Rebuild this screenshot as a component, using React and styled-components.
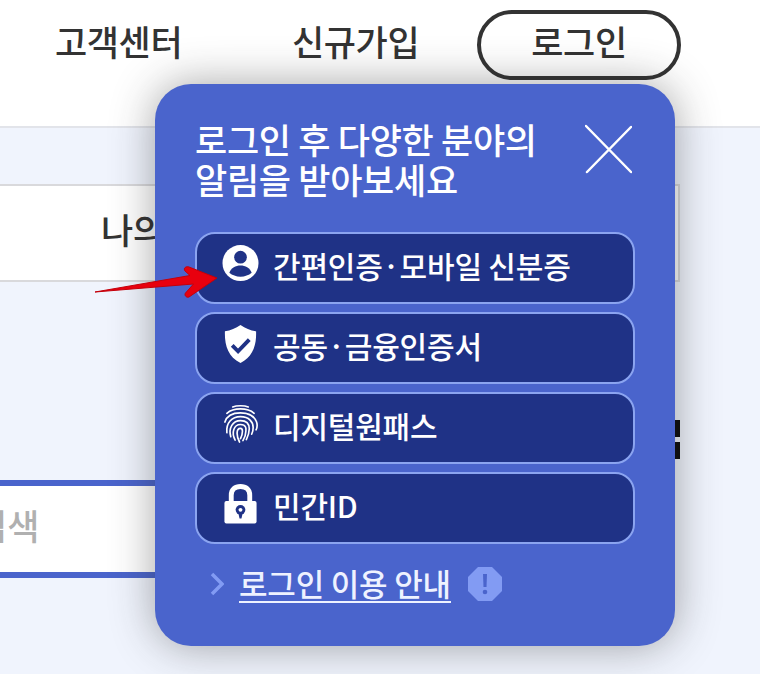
import React from 'react'
import styled, {createGlobalStyle} from 'styled-components'

const colors = {
	panel: '#4a64cc',
	navy: '#1f3286',
	line: '#8ba4f0',
	accent: '#829bf3',
	page: '#f0f4fd',
	ink: '#333333',
}

const GlobalStyle = createGlobalStyle`
	html, body {
		margin: 0;
		padding: 0;
	}
	body {
		width: 760px;
		height: 674px;
		overflow: hidden;
		background: ${colors.page};
		font-family: 'Noto Sans CJK KR', 'Noto Sans', sans-serif;
	}
`

const Page = styled.div`
	position: relative;
	width: 760px;
	height: 674px;
	overflow: hidden;
`

const Header = styled.header`
	display: flex;
	align-items: flex-start;
	height: 128px;
	padding: 10px 0 0 55px;
	box-sizing: border-box;
	background: #fff;
	border-bottom: 2px solid #e2e4ea;
`

const NavLink = styled.a`
	width: 237px;
	height: 70px;
	line-height: 62px;
	font-size: 35px;
	font-weight: 500;
	letter-spacing: -0.4px;
	color: ${colors.ink};
`

const LoginButton = styled.a`
	width: 204px;
	height: 70px;
	margin-left: -52px;
	box-sizing: border-box;
	border: 4px solid ${colors.ink};
	border-radius: 35px;
	line-height: 54px;
	text-align: center;
	font-size: 35px;
	font-weight: 500;
	letter-spacing: -0.4px;
	color: ${colors.ink};
`

const Content = styled.main`
	display: flex;
	flex-direction: column;
	padding-top: 56px;
`

const MenuRow = styled.div`
	height: 98px;
	width: 682px;
	margin-left: -2px;
	padding-left: 101px;
	box-sizing: border-box;
	background: #fff;
	border: 2px solid #d9d9dc;
	line-height: 86px;
	font-size: 35px;
	font-weight: 500;
	letter-spacing: -0.5px;
	color: ${colors.ink};
`

const Marks = styled.div`
	display: flex;
	flex-direction: column;
	gap: 5px;
	align-self: flex-end;
	width: 25px;
	margin: 138px 80px 0 0;
`

const Mark = styled.span`
	height: 17px;
	background: #0a0a0c;
`

const SearchBox = styled.div`
	width: 300px;
	height: 98px;
	margin-top: 21px;
	box-sizing: border-box;
	background: #fff;
	border-top: 6px solid ${colors.panel};
	border-bottom: 6px solid ${colors.panel};
	overflow: hidden;
`

const SearchHint = styled.span`
	display: block;
	margin-left: -25px;
	line-height: 78px;
	font-size: 35px;
	font-weight: 500;
	color: #b0b0b0;
`

const Popup = styled.section`
	position: absolute;
	left: 155px;
	top: 84px;
	display: flex;
	flex-direction: column;
	width: 520px;
	height: 562px;
	padding: 35px 40px 0;
	box-sizing: border-box;
	background: ${colors.panel};
	border-radius: 36px;
	box-shadow: 0 0 44px rgba(40, 40, 40, 0.42);
`

const PopupTop = styled.div`
	display: flex;
	justify-content: space-between;
	align-items: flex-start;
	height: 113px;
`

const Title = styled.h2`
	margin: 0;
	font-size: 35px;
	line-height: 40px;
	font-weight: 500;
	letter-spacing: -0.3px;
	white-space: nowrap;
	color: #fff;
`

const CloseIcon = styled.svg`
	display: block;
	width: 47px;
	height: 50px;
	margin: 5px 3px 0 0;
`

const Options = styled.div`
	display: flex;
	flex-direction: column;
	gap: 8px;
`

const Option = styled.a`
	display: flex;
	align-items: center;
	gap: 14px;
	height: 72px;
	padding: 0 0 6px 25px;
	box-sizing: border-box;
	background: ${colors.navy};
	border: 2px solid ${colors.line};
	border-radius: 20px;
	font-size: 30px;
	font-weight: 500;
	letter-spacing: -0.2px;
	color: #fff;
`

const OptionIcon = styled.svg`
	flex: none;
	display: block;
	width: 37px;
	height: 40px;
	margin-bottom: 3px;
`

const GuideRow = styled.div`
	display: flex;
	align-items: center;
	height: 40px;
	margin-top: 20px;
	padding-left: 15px;
`

const Chevron = styled.svg`
	display: block;
	width: 14px;
	height: 24px;
	margin-right: 15px;
`

const GuideLink = styled.a`
	font-size: 31px;
	line-height: 36px;
	font-weight: 500;
	letter-spacing: -0.2px;
	color: #eef2ff;
	border-bottom: 2px solid #eef2ff;
`

const GuideIcon = styled.svg`
	display: block;
	width: 34px;
	height: 34px;
	margin-left: 17px;
`

const Arrow = styled.svg`
	position: absolute;
	left: 90px;
	top: 260px;
	width: 135px;
	height: 45px;
`

const UserIcon = () => (
	<OptionIcon viewBox="0 0 38 40">
		<circle cx="19" cy="19" r="18.500" fill="#fff" />
		<circle cx="19" cy="13" r="6.500" fill={colors.navy} />
		<path d="M7.500 29c2-5 6.500-7.500 11.500-7.500s9.500 2.500 11.500 7.500c-3 2.500-7 4-11.500 4s-8.500-1.500-11.500-4z" fill={colors.navy} />
	</OptionIcon>
)

const ShieldIcon = () => (
	<OptionIcon viewBox="0 0 38 40">
		<path d="M19 0.500C24 4 29 6 35 7c.5 14-3 26-16 32.500C6 33 2.500 21 3 7c6-1 11-3 16-6.500z" fill="#fff" />
		<path d="M10.500 21.500l6 6L28 15.500" fill="none" stroke={colors.navy} strokeWidth="4" />
	</OptionIcon>
)

// loose spiral, open towards the lower left like the reference print
const FingerprintIcon = () => (
	<OptionIcon viewBox="0 0 38 40" fill="none" stroke="#fff" strokeWidth="1.700" strokeLinecap="round">
		<path d="M11 2.500C15 .8 23 .8 27 2.500" />
		<path d="M5 9C9 5.500 14 4.500 19 4.500S29 5.500 33 9" />
		<path d="M3 18C5 11 11 8.500 19 8.500S33 11 35.500 18c1 3 .5 6-.5 8" />
		<path d="M5 29C4 19 10 12.500 19 12.500S32 18 32 23.500c0 3-.5 5-1.500 7" />
		<path d="M9 33C6.500 24 11 16.500 19 16.500S28 21 28 25c0 5-1.500 8-3 11" />
		<path d="M13.500 36.500C9.500 29 12 20.500 19 20.500s5.500 6 5.500 7c0 3.500-1.500 7-3 9.500" />
		<path d="M18 38.500C15 33 14 24.500 19 24.500c2 0 2 2 2 3 0 3-1 5.500-2 7.500" />
	</OptionIcon>
)

const LockIcon = () => (
	<OptionIcon viewBox="0 0 38 40">
		<path d="M9.500 18V11C9.500 5 13.500 2 19 2s9.500 3 9.500 9v7" fill="none" stroke="#fff" strokeWidth="5" />
		<rect x="2.500" y="17" width="33" height="23" rx="2" fill="#fff" />
		<circle cx="19" cy="26" r="5" fill={colors.navy} />
		<path d="M16.500 28h5l-1.500 7h-2z" fill={colors.navy} />
		<circle cx="19" cy="26" r="2" fill="#fff" />
	</OptionIcon>
)

const options = [
	{label: '간편인증·모바일 신분증', Icon: UserIcon},
	{label: '공동·금융인증서', Icon: ShieldIcon},
	{label: '디지털원패스', Icon: FingerprintIcon},
	{label: '민간ID', Icon: LockIcon},
]

const App = () => (
	<Page>
		<GlobalStyle />
		<Header>
			<NavLink>고객센터</NavLink>
			<NavLink>신규가입</NavLink>
			<LoginButton>로그인</LoginButton>
		</Header>
		<Content>
			<MenuRow>나의</MenuRow>
			<Marks>
				<Mark />
				<Mark />
			</Marks>
			<SearchBox>
				<SearchHint>검색</SearchHint>
			</SearchBox>
		</Content>
		<Popup>
			<PopupTop>
				<Title>
					로그인 후 다양한 분야의
					<br />
					알림을 받아보세요
				</Title>
				<CloseIcon viewBox="0 0 47 50">
					<path d="M1 2l45 46M46 3L2 48" stroke="#fff" strokeWidth="2.500" strokeLinecap="round" />
				</CloseIcon>
			</PopupTop>
			<Options>
				{options.map(({label, Icon}) => (
					<Option key={label}>
						<Icon />
						{label}
					</Option>
				))}
			</Options>
			<GuideRow>
				<Chevron viewBox="0 0 14 24">
					<path d="M2 2l10 10L2 22" fill="none" stroke={colors.accent} strokeWidth="3.500" />
				</Chevron>
				<GuideLink>로그인 이용 안내</GuideLink>
				<GuideIcon viewBox="0 0 34 34">
					<path d="M10 0h14l10 10v14L24 34H10L0 24V10z" fill={colors.accent} />
					<path d="M15 7h4l-.5 13h-3z" fill={colors.panel} />
					<circle cx="17" cy="25" r="2.300" fill={colors.panel} />
				</GuideIcon>
			</GuideRow>
		</Popup>
		<Arrow viewBox="0 0 135 45">
			<path
				d="M5 32 100 15.500 95 11c-2-3 1-5 4-4l28 11-28 19c-3 1-5-2-3.500-4l8-9z"
				fill="#e8000e"
				stroke="#c4000a"
				strokeWidth="1"
			/>
		</Arrow>
	</Page>
)

export default App
